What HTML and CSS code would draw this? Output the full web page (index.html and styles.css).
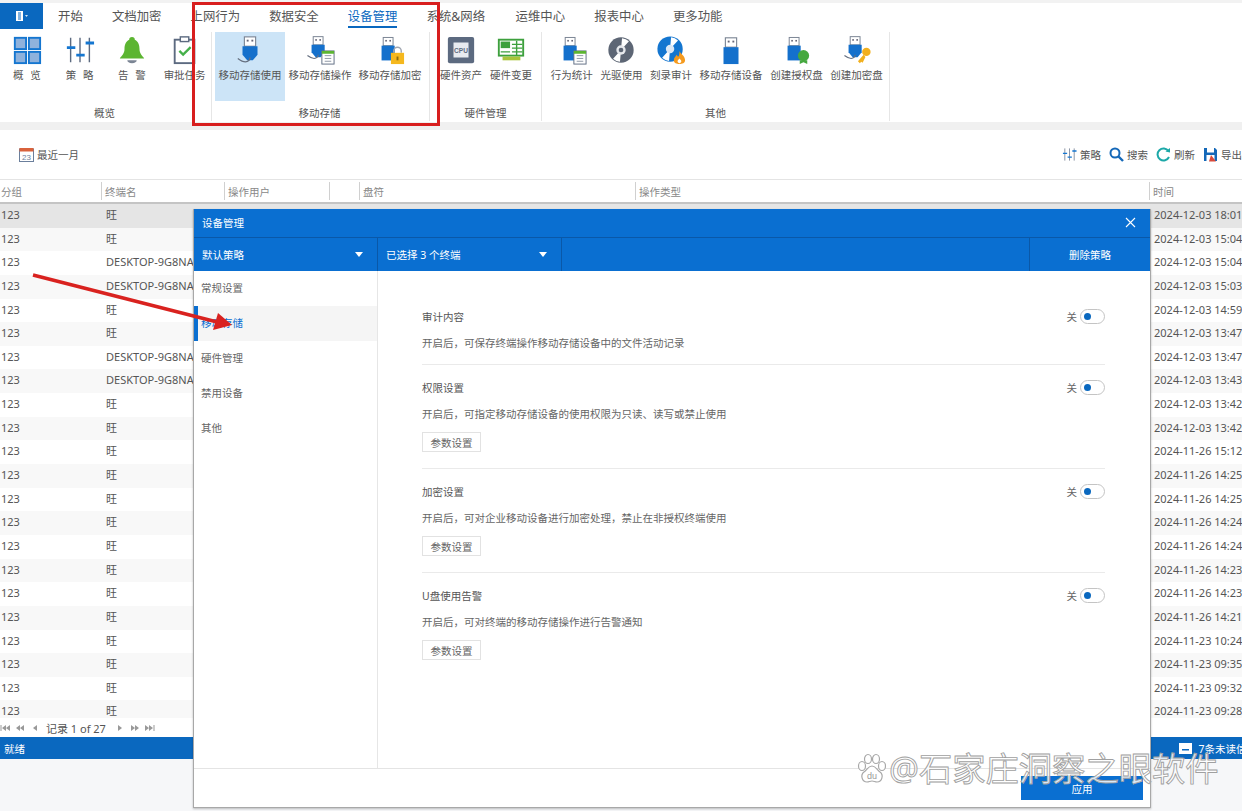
FILE: index.html
```html
<!DOCTYPE html>
<html lang="zh-CN">
<head>
<meta charset="utf-8">
<title>设备管理</title>
<link rel="stylesheet" href="styles.css">
</head>
<body>
<svg class="defs" aria-hidden="true">
  <symbol id="usb" viewBox="0 0 32 32"><rect x="10" y="3" width="12" height="10" fill="#fff" stroke="#7b8594" stroke-width="1.2"/><rect x="12.5" y="6" width="2" height="2" fill="#667"/><rect x="17.5" y="6" width="2" height="2" fill="#667"/><rect x="8" y="13" width="16" height="18" fill="#1470cc"/></symbol>
  <symbol id="usbt" viewBox="0 0 32 32"><rect x="10" y="2" width="12" height="10" fill="#fff" stroke="#7b8594" stroke-width="1.2"/><rect x="12.5" y="5" width="2" height="2" fill="#667"/><rect x="17.5" y="5" width="2" height="2" fill="#667"/><path d="M8 12h16v9l-5 6h-6l-5-6z" fill="#1470cc"/><path d="M3 25c4 3 9 5 12 2 1-1 1-2 1-3" fill="none" stroke="#667080" stroke-width="1.4"/></symbol>
  <symbol id="sliders" viewBox="0 0 32 32"><path d="M6 3v26M16 3v26M26 3v26" stroke="#5c6a80" stroke-width="1.5"/><path d="M2 12h9v3H2zM12 20h9v3h-9zM22 7h9v3h-9z" fill="#1476d0"/></symbol>
  <symbol id="disc" viewBox="0 0 32 32"><circle cx="16" cy="16" r="13.5" fill="#5d6675"/><path d="M16 16 22 5a13 13 0 0 0-8-1.500zM16 16l-6 11a13 13 0 0 0 8 1.500z" fill="#fff" transform="rotate(14 16 16)"/><circle cx="16" cy="16" r="5" fill="#e6e8ec"/><circle cx="16" cy="16" r="2.500" fill="#5d6675"/></symbol>
  <symbol id="first" viewBox="0 0 10 8"><path d="M1 1v6" stroke="#999" fill="none"/><path d="M6 1 2 4l4 3zM10 1 6 4l4 3z" fill="#999"/></symbol>
  <symbol id="prev2" viewBox="0 0 10 8"><path d="M5 1 1 4l4 3zM9 1 5 4l4 3z" fill="#999"/></symbol>
  <symbol id="prev" viewBox="0 0 10 8"><path d="M7 1 3 4l4 3z" fill="#999"/></symbol>
  <symbol id="next" viewBox="0 0 10 8"><path d="M3 1l4 3-4 3z" fill="#999"/></symbol>
  <symbol id="next2" viewBox="0 0 10 8"><path d="M1 1l4 3-4 3zM5 1l4 3-4 3z" fill="#999"/></symbol>
  <symbol id="last" viewBox="0 0 10 8"><path d="M0 1l4 3-4 3zM4 1l4 3-4 3z" fill="#999"/><path d="M9 1v6" stroke="#999" fill="none"/></symbol>
</svg>

<div class="app">
  <nav class="tabs">
    <div class="file-btn"><svg width="14" height="12" viewBox="0 0 14 12"><path d="M1 1h7v10H1z" fill="#fff"/><path d="M3 3h3M3 5h3M3 7h3M3 9h3" stroke="#0a68bf"/><path d="M10 5h3l-1.500 2z" fill="#cfe0f2"/></svg></div>
    <div class="tab-list">
      <span class="tab">开始</span>
      <span class="tab">文档加密</span>
      <span class="tab">上网行为</span>
      <span class="tab">数据安全</span>
      <span class="tab tab-active">设备管理</span>
      <span class="tab tab-wide">系统&amp;网络</span>
      <span class="tab">运维中心</span>
      <span class="tab">报表中心</span>
      <span class="tab">更多功能</span>
    </div>
  </nav>

  <section class="ribbon">
    <div class="group group-overview">
      <div class="group-btns">
        <div class="rb rb-overview"><svg class="ic" viewBox="0 0 32 32"><g fill="#8fb2dc" stroke="#1476d0" stroke-width="2"><rect x="3" y="3" width="12" height="12"/><rect x="18" y="3" width="12" height="12"/><rect x="3" y="18" width="12" height="12"/><rect x="18" y="18" width="12" height="12"/></g></svg><span>概 览</span></div>
        <div class="rb rb-strategy"><svg class="ic"><use href="#sliders"/></svg><span>策 略</span></div>
        <div class="rb rb-alarm"><svg class="ic" viewBox="0 0 32 32"><path d="M16 2c2 0 3 1 3 3 4 2 5 6 5 10 0 5 3 7 5 10H3c2-3 5-5 5-10 0-4 1-8 5-10 0-2 1-3 3-3z" fill="#5cb531"/><path d="M11 27h10c0 2-2 3-5 3s-5-1-5-3z" fill="#7b8594"/></svg><span>告 警</span></div>
        <div class="rb rb-approve"><svg class="ic" viewBox="0 0 32 32"><rect x="5" y="5" width="21" height="25" fill="#fff" stroke="#5c6a80" stroke-width="2"/><rect x="11" y="2" width="9" height="5" fill="#fff" stroke="#5c6a80" stroke-width="1.500"/><path d="m10 17 4 4 8-8" fill="none" stroke="#45b04a" stroke-width="2.500"/></svg><span>审批任务</span></div>
      </div>
      <div class="group-name">概览</div>
    </div>
    <div class="group group-storage">
      <div class="group-btns">
        <div class="rb rb-selected"><svg class="ic"><use href="#usbt"/></svg><span>移动存储使用</span></div>
        <div class="rb"><svg class="ic" viewBox="0 0 32 32"><use href="#usbt" width="28" height="28"/><rect x="18" y="17" width="13" height="14" fill="#fff" stroke="#5c6a80"/><rect x="18" y="17" width="13" height="3" fill="#5cb531"/><path d="M21 22h7M21 25h7M21 28h7" stroke="#8a94a2"/></svg><span>移动存储操作</span></div>
        <div class="rb"><svg class="ic" viewBox="0 0 32 32"><use href="#usb" width="28" height="28"/><path d="M20 19v-2a4 4 0 0 1 8 0v2" fill="none" stroke="#a0a6b0" stroke-width="1.500"/><rect x="17" y="19" width="14" height="12" fill="#f5b81e"/><rect x="23" y="23" width="2" height="4" fill="#8a6a10"/></svg><span>移动存储加密</span></div>
      </div>
      <div class="group-name">移动存储</div>
    </div>
    <div class="group group-hardware">
      <div class="group-btns">
        <div class="rb"><svg class="ic" viewBox="0 0 32 32"><rect x="2" y="2" width="28" height="28" rx="2" fill="#5c6a80"/><rect x="8" y="8" width="16" height="16" fill="#e8ebf0"/><text x="16" y="19" class="cpu-text">CPU</text></svg><span>硬件资产</span></div>
        <div class="rb"><svg class="ic" viewBox="0 0 32 32"><rect x="3" y="5" width="26" height="17" fill="#fff" stroke="#3da03d" stroke-width="2"/><rect x="5" y="7" width="10" height="7" fill="#3da03d"/><path d="M17 10h11M17 14h11M17 18h11M22 6v16M5 18h10" stroke="#3da03d" stroke-width="1.500"/><rect x="7" y="23" width="19" height="4" fill="#a8c43c"/></svg><span>硬件变更</span></div>
      </div>
      <div class="group-name">硬件管理</div>
    </div>
    <div class="group group-other">
      <div class="group-btns">
        <div class="rb"><svg class="ic" viewBox="0 0 32 32"><use href="#usb" width="28" height="28"/><rect x="18" y="17" width="13" height="14" fill="#fff" stroke="#5c6a80"/><rect x="18" y="17" width="13" height="3" fill="#5cb531"/><path d="M21 22h7M21 25h7M21 28h7" stroke="#8a94a2"/></svg><span>行为统计</span></div>
        <div class="rb"><svg class="ic"><use href="#disc"/></svg><span>光驱使用</span></div>
        <div class="rb"><svg class="ic" viewBox="0 0 32 32"><circle cx="15" cy="15" r="13.500" fill="#1476d0"/><path d="M15 15 21 4a13 13 0 0 0-8-1.500zM15 15 9 26a13 13 0 0 0 8 1.500z" fill="#fff" transform="rotate(14 15 15)"/><circle cx="15" cy="15" r="4.500" fill="#dce8f5"/><path d="M25 17c1 3 6 5 6 10 0 3-3 4-6 4s-6-1-6-4c0-3 2-4 3-6 1 1 1 2 2 2 1-2 1-4 1-6z" fill="#f59a1e"/><path d="M25 25c1 1 2 2 2 3s-1 2-2 2-2-1-2-2 1-2 2-3z" fill="#fff"/></svg><span>刻录审计</span></div>
        <div class="rb"><svg class="ic"><use href="#usb"/></svg><span>移动存储设备</span></div>
        <div class="rb"><svg class="ic" viewBox="0 0 32 32"><use href="#usb" width="28" height="28"/><circle cx="24" cy="22" r="6" fill="#45a83f"/><path d="M20 27h8v4l-4-2-4 2z" fill="#45a83f"/></svg><span>创建授权盘</span></div>
        <div class="rb"><svg class="ic" viewBox="0 0 32 32"><use href="#usbt" width="28" height="28"/><circle cx="26" cy="18" r="4.500" fill="#f2b01e"/><path d="m23 21-6 7 2 2 1.500-1.500 1.500 1 3-6z" fill="#f2b01e"/></svg><span>创建加密盘</span></div>
      </div>
      <div class="group-name">其他</div>
    </div>
  </section>
  <div class="ribbon-gap"></div>

  <div class="toolbar">
    <div class="tool tool-date"><svg width="15" height="15" viewBox="0 0 15 15"><rect x="0.500" y="2" width="14" height="12.500" fill="#fff" stroke="#6b7f9c"/><rect x="0.500" y="1" width="14" height="3.500" fill="#d9623c"/><text x="7.500" y="12.500" class="cal-text">23</text></svg><span>最近一月</span></div>
    <div class="tools-right">
      <div class="tool"><svg width="15" height="15"><use href="#sliders"/></svg><span>策略</span></div>
      <div class="tool"><svg width="15" height="15" viewBox="0 0 15 15"><circle cx="6" cy="6" r="4.500" fill="none" stroke="#1468b8" stroke-width="2"/><path d="m9.500 9.500 4.500 4.500" stroke="#1468b8" stroke-width="2.400"/></svg><span>搜索</span></div>
      <div class="tool"><svg width="15" height="15" viewBox="0 0 15 15"><path d="M12.500 4A6 6 0 1 0 13 10" fill="none" stroke="#1ca8a8" stroke-width="2"/><path d="M9.500 4.500 14 5.500V1z" fill="#1ca8a8"/></svg><span>刷新</span></div>
      <div class="tool"><svg width="15" height="15" viewBox="0 0 15 15"><path d="M1 1h11l2 2v11H1z" fill="#1468b8"/><rect x="4" y="1" width="7" height="4.500" fill="#fff"/><rect x="3.500" y="8" width="8" height="6" fill="#fff"/><path d="M8 8l5 6.500H6z" fill="#d84a3a"/></svg><span>导出</span></div>
    </div>
  </div>

  <div class="grid-head">
    <div class="cell">分组</div><div class="cell">终端名</div><div class="cell">操作用户</div><div class="cell"></div><div class="cell">盘符</div><div class="cell">操作类型</div><div class="cell">时间</div>
  </div>
  <div class="grid-body">
    <div class="row row-selected"><span>123</span><span>旺</span><span></span><span></span><span></span><span></span><span>2024-12-03 18:01</span></div>
    <div class="row"><span>123</span><span>旺</span><span></span><span></span><span></span><span></span><span>2024-12-03 15:04</span></div>
    <div class="row"><span>123</span><span>DESKTOP-9G8NA</span><span></span><span></span><span></span><span></span><span>2024-12-03 15:04</span></div>
    <div class="row"><span>123</span><span>DESKTOP-9G8NA</span><span></span><span></span><span></span><span></span><span>2024-12-03 15:03</span></div>
    <div class="row"><span>123</span><span>旺</span><span></span><span></span><span></span><span></span><span>2024-12-03 14:59</span></div>
    <div class="row"><span>123</span><span>旺</span><span></span><span></span><span></span><span></span><span>2024-12-03 13:47</span></div>
    <div class="row"><span>123</span><span>DESKTOP-9G8NA</span><span></span><span></span><span></span><span></span><span>2024-12-03 13:47</span></div>
    <div class="row"><span>123</span><span>DESKTOP-9G8NA</span><span></span><span></span><span></span><span></span><span>2024-12-03 13:43</span></div>
    <div class="row"><span>123</span><span>旺</span><span></span><span></span><span></span><span></span><span>2024-12-03 13:42</span></div>
    <div class="row"><span>123</span><span>旺</span><span></span><span></span><span></span><span></span><span>2024-12-03 13:42</span></div>
    <div class="row"><span>123</span><span>旺</span><span></span><span></span><span></span><span></span><span>2024-11-26 15:12</span></div>
    <div class="row"><span>123</span><span>旺</span><span></span><span></span><span></span><span></span><span>2024-11-26 14:25</span></div>
    <div class="row"><span>123</span><span>旺</span><span></span><span></span><span></span><span></span><span>2024-11-26 14:25</span></div>
    <div class="row"><span>123</span><span>旺</span><span></span><span></span><span></span><span></span><span>2024-11-26 14:24</span></div>
    <div class="row"><span>123</span><span>旺</span><span></span><span></span><span></span><span></span><span>2024-11-26 14:24</span></div>
    <div class="row"><span>123</span><span>旺</span><span></span><span></span><span></span><span></span><span>2024-11-26 14:23</span></div>
    <div class="row"><span>123</span><span>旺</span><span></span><span></span><span></span><span></span><span>2024-11-26 14:23</span></div>
    <div class="row"><span>123</span><span>旺</span><span></span><span></span><span></span><span></span><span>2024-11-26 14:21</span></div>
    <div class="row"><span>123</span><span>旺</span><span></span><span></span><span></span><span></span><span>2024-11-23 10:24</span></div>
    <div class="row"><span>123</span><span>旺</span><span></span><span></span><span></span><span></span><span>2024-11-23 09:35</span></div>
    <div class="row"><span>123</span><span>旺</span><span></span><span></span><span></span><span></span><span>2024-11-23 09:32</span></div>
    <div class="row"><span>123</span><span>旺</span><span></span><span></span><span></span><span></span><span>2024-11-23 09:28</span></div>
  </div>
  <div class="pager">
    <svg class="pg"><use href="#first"/></svg><svg class="pg"><use href="#prev2"/></svg><svg class="pg"><use href="#prev"/></svg>
    <span class="pager-text">记录 1 of 27</span>
    <svg class="pg"><use href="#next"/></svg><svg class="pg"><use href="#next2"/></svg><svg class="pg"><use href="#last"/></svg>
  </div>
  <footer class="status">
    <span>就绪</span>
    <span class="unread"><svg width="13" height="11" viewBox="0 0 13 11"><rect width="13" height="11" fill="#fff"/><rect x="3" y="6" width="7" height="1.500" fill="#0a68bf"/></svg>7条未读信息</span>
  </footer>
  <div class="page-rest"></div>
</div>

<div class="dialog">
  <header class="dlg-title"><span>设备管理</span><svg width="11" height="11" viewBox="0 0 11 11"><path d="m1 1 9 9M10 1l-9 9" stroke="#fff" stroke-width="1.100"/></svg></header>
  <div class="dlg-bar">
    <div class="seg seg-policy"><span>默认策略</span><i class="caret"></i></div>
    <div class="seg seg-select"><span>已选择 3 个终端</span><i class="caret"></i></div>
    <div class="seg seg-fill"></div>
    <div class="seg seg-delete">删除策略</div>
  </div>
  <div class="dlg-body">
    <aside class="side">
      <div class="side-item">常规设置</div>
      <div class="side-item side-active">移动存储</div>
      <div class="side-item">硬件管理</div>
      <div class="side-item">禁用设备</div>
      <div class="side-item">其他</div>
    </aside>
    <main class="content">
      <section class="opt opt-first">
        <div class="opt-head"><span>审计内容</span><span class="switch-wrap">关<i class="switch"></i></span></div>
        <p class="opt-desc">开启后，可保存终端操作移动存储设备中的文件活动记录</p>
      </section>
      <section class="opt">
        <div class="opt-head"><span>权限设置</span><span class="switch-wrap">关<i class="switch"></i></span></div>
        <p class="opt-desc">开启后，可指定移动存储设备的使用权限为只读、读写或禁止使用</p>
        <button class="param">参数设置</button>
      </section>
      <section class="opt">
        <div class="opt-head"><span>加密设置</span><span class="switch-wrap">关<i class="switch"></i></span></div>
        <p class="opt-desc">开启后，可对企业移动设备进行加密处理，禁止在非授权终端使用</p>
        <button class="param">参数设置</button>
      </section>
      <section class="opt opt-last">
        <div class="opt-head"><span>U盘使用告警</span><span class="switch-wrap">关<i class="switch"></i></span></div>
        <p class="opt-desc">开启后，可对终端的移动存储操作进行告警通知</p>
        <button class="param">参数设置</button>
      </section>
    </main>
  </div>
  <footer class="dlg-foot"><button class="apply">应用</button></footer>
</div>

<div class="red-box"></div>
<svg class="arrow" width="240" height="80" viewBox="0 0 240 80"><path d="M2 2 190 50" stroke="#d9221f" stroke-width="3.600" fill="none"/><path d="M187 40 201 52 182 57z" fill="#d9221f"/></svg>
<div class="watermark">
  <svg width="29" height="31" viewBox="0 0 29 31"><g fill="#fff" stroke="#a8a8a8" stroke-width="1.200"><ellipse cx="5" cy="13" rx="3.500" ry="4.500"/><ellipse cx="11" cy="6" rx="3.500" ry="4.500"/><ellipse cx="19" cy="6" rx="3.500" ry="4.500"/><ellipse cx="25" cy="13" rx="3.500" ry="4.500"/><path d="M15 13c4 0 5 4 8 6 4 3 2 10-3 10-2 0-3-1-5-1s-3 1-5 1c-5 0-7-7-3-10 3-2 4-6 8-6z"/></g><text x="15" y="26" class="paw-text">du</text></svg>
  <span>@石家庄洞察之眼软件</span>
</div>
</body>
</html>
```

FILE: styles.css
```css
* { box-sizing: border-box; }
html, body { margin: 0; padding: 0; }
body {
  width: 1242px;
  height: 811px;
  overflow: hidden;
  position: relative;
  background: #f6f7f9;
  color: #555;
  font-family: "Noto Sans", "Noto Sans CJK SC", sans-serif;
  font-size: 10.5px;
}
.defs { display: none; }
.app { display: flex; flex-direction: column; height: 811px; }

/* tabs */
.tabs { display: flex; height: 30px; padding-top: 3px; background: #fff; box-shadow: inset 0 3px 0 #f2f2f2; }
.file-btn { width: 43px; height: 26px; background: #0a68bf; display: flex; align-items: center; justify-content: center; }
.tab-list { display: flex; gap: 29.1px; margin-left: 15px; }
.tab { font-size: 12.4px; line-height: 22px; height: 25px; padding-top: 3px; color: #555; white-space: nowrap; }
.tab-wide { width: 60px; }
.tab-active { color: #0a68bf; border-bottom: 2px solid #0a68bf; }

/* ribbon */
.ribbon { display: flex; height: 92px; background: #fff; }
.group { display: flex; flex-direction: column; height: 89px; border-right: 1px solid #e6e6e6; margin-top: 2px; }
.group-btns { display: flex; height: 69px; }
.group-name { text-align: center; line-height: 14px; margin-top: 5px; color: #555; }
.group-overview { width: 212px; }
.group-overview .group-name { padding-right: 2px; }
.group-storage { width: 218px; padding-left: 3px; }
.group-storage .group-name { padding-right: 5px; }
.group-hardware { width: 112px; padding-left: 6px; }
.group-hardware .group-name { padding-right: 6px; }
.group-other { width: 348px; padding-left: 5px; }
.group-other .group-name { padding-right: 5px; }
.rb { display: flex; flex-direction: column; align-items: center; padding: 2px 3.5px 0; white-space: nowrap; word-spacing: 4px; }
.rb span { line-height: 14px; margin-top: 2px; }
.group-other .rb { padding-left: 3.8px; padding-right: 3.8px; }
.group-hardware .rb { padding-left: 4px; padding-right: 4px; }
.rb-overview { width: 54px; }
.rb-strategy { width: 52px; }
.rb-alarm { width: 53px; }
.rb-approve { width: 53px; }
.rb-selected { background: #cce4f7; }
.ic { width: 30px; height: 32px; flex: none; }
.cpu-text { font-family: "Liberation Sans", sans-serif; font-size: 7px; font-weight: 700; fill: #5c6a80; text-anchor: middle; }
.ribbon-gap { height: 8px; background: #f0f0f0; }

/* toolbar */
.toolbar { height: 49px; display: flex; align-items: center; justify-content: space-between; background: #fff; padding-left: 19px; }
.tool { display: flex; align-items: center; gap: 3px; white-space: nowrap; }
.tools-right { display: flex; gap: 8px; width: 180px; }
.cal-text { font-family: "Liberation Sans", sans-serif; font-size: 8px; fill: #6b7f9c; text-anchor: middle; }

/* grid */
.grid-head, .row { display: grid; grid-template-columns: 102px 123px 105px 30px 276px 514px 92px; }
.grid-head { height: 25px; background: #fff; border-top: 1px solid #e4e4e4; border-bottom: 2px solid #c4c4c4; color: #888; }
.cell { border-right: 1px solid #d0d0d0; padding-left: 3px; line-height: 21px; height: 18px; margin-top: 2px; }
.cell:first-child { padding-left: 1px; }
.cell:last-child { border-right: 0; }
.grid-body { height: 514px; overflow: hidden; background: #fff; }
.row { height: 23.65px; line-height: 22px; font-size: 11px; color: #555; }
.row:nth-child(even) { background: #f8f8f8; }
.row-selected { background: #e5e5e5; }
.row span { padding-left: 4px; white-space: nowrap; overflow: hidden; }
.row span:first-child { padding-left: 1px; }

/* pager */
.pager { height: 19px; background: #fff; display: flex; align-items: center; }
.pg { width: 10px; height: 8px; margin-right: 5px; flex: none; }
.pager-text { font-size: 11px; margin: 0 9px 0 1px; color: #555; white-space: nowrap; }

/* status */
.status { height: 22px; background: #0a68bf; color: #fff; display: flex; justify-content: space-between; align-items: center; padding-left: 4px; white-space: nowrap; overflow: hidden; }
.unread { display: flex; align-items: center; gap: 6px; margin-right: -15px; }
.page-rest { flex: 1; background: #f6f7f9; }

/* dialog */
.dialog {
  position: absolute; left: 193px; top: 209px; width: 958px; height: 599px;
  background: #fff; border: solid #a8a8a8; border-width: 0 1px 1px 1px;
  box-shadow: 0 1px 2px rgba(0,0,0,.25);
  display: flex; flex-direction: column;
}
.dlg-title { height: 29px; background: #0a6fd1; color: #fff; border-bottom: 1px solid #0a58a8; display: flex; align-items: center; justify-content: space-between; padding: 0 14px 2px 8px; flex: none; }
.dlg-bar { height: 33px; background: #0a6fd1; color: #fff; display: flex; flex: none; }
.seg { display: flex; align-items: center; justify-content: space-between; border-right: 1px solid #0a58a8; padding: 0 14px 0 8px; height: 33px; }
.seg-policy { width: 184px; }
.seg-select { width: 184px; }
.seg-fill { width: 468px; }
.seg-delete { flex: 1; border-right: 0; justify-content: center; padding: 0; }
.caret { width: 0; height: 0; border: 4.5px solid transparent; border-top: 5px solid #fff; border-bottom: 0; }
.dlg-body { flex: 1; display: flex; min-height: 0; }
.side { width: 184px; border-right: 1px solid #e6e6e6; flex: none; }
.side-item { height: 35px; line-height: 35px; padding-left: 7px; color: #666; }
.side-active { background: #f5f5f5; color: #0a6fd1; border-left: 4px solid #0a6fd1; padding-left: 3px; }
.content { flex: 1; padding: 0 45px 0 44px; }
.opt { padding: 12px 0 16px; border-bottom: 1px solid #eaeaea; }
.opt-first { padding: 35px 0 11px; }
.opt-last { border-bottom: 0; }
.opt-head { display: flex; justify-content: space-between; align-items: center; height: 20px; color: #555; }
.opt-desc { margin: 7px 0 0; line-height: 20px; color: #666; }
.switch-wrap { display: flex; align-items: center; gap: 3px; color: #666; }
.switch { position: relative; width: 25px; height: 15px; border: 1px solid #c4c4c4; border-radius: 8px; background: #fff; display: block; }
.switch::after { content: ""; position: absolute; left: 3px; top: 3px; width: 7px; height: 7px; border-radius: 50%; background: #0a68bf; }
.param { display: block; margin-top: 8px; width: 59px; height: 20px; padding: 0; background: #fff; border: 1px solid #e2e2e2; color: #666; font: inherit; }
.dlg-foot { height: 39px; border-top: 1px solid #e4e4e4; display: flex; justify-content: flex-end; padding: 7px 7px 0 0; flex: none; }
.apply { width: 122px; height: 24px; background: #0a6fd1; border: 0; color: #fff; font: inherit; padding: 0; }

/* annotations */
.red-box { position: absolute; left: 192px; top: 2px; width: 248px; height: 124px; border: 3.5px solid #d81e1e; }
.arrow { position: absolute; left: 31px; top: 273px; }
.watermark { position: absolute; left: 857px; top: 748px; display: flex; align-items: center; gap: 3px; white-space: nowrap; }
.watermark span { font-size: 33.3px; line-height: 40px; color: rgba(255,255,255,.85); -webkit-text-stroke: 0.9px #a0a0a0; }
.paw-text { font-family: "Liberation Sans", sans-serif; font-size: 9px; fill: #999; text-anchor: middle; }
```
